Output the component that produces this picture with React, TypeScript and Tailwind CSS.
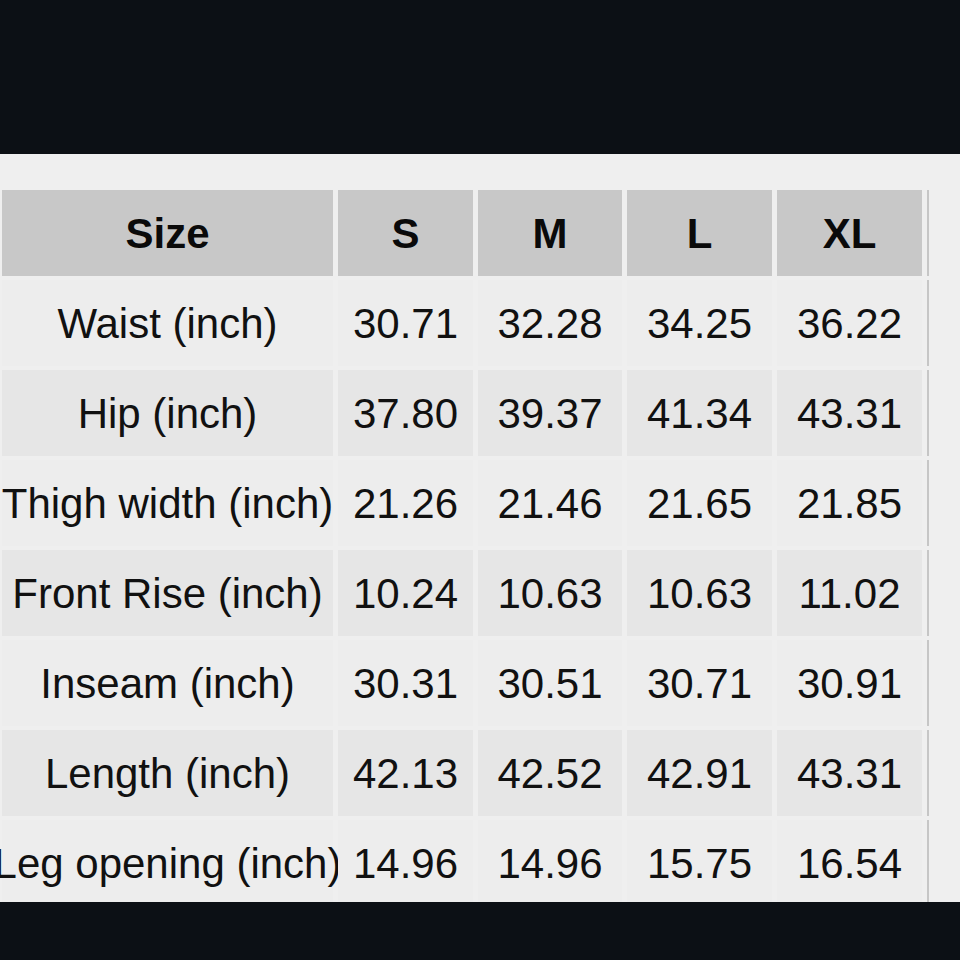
const sizes = ["S", "M", "L", "XL"];

const rows: { label: string; values: string[] }[] = [
  { label: "Waist (inch)", values: ["30.71", "32.28", "34.25", "36.22"] },
  { label: "Hip (inch)", values: ["37.80", "39.37", "41.34", "43.31"] },
  { label: "Thigh width (inch)", values: ["21.26", "21.46", "21.65", "21.85"] },
  { label: "Front Rise (inch)", values: ["10.24", "10.63", "10.63", "11.02"] },
  { label: "Inseam (inch)", values: ["30.31", "30.51", "30.71", "30.91"] },
  { label: "Length (inch)", values: ["42.13", "42.52", "42.91", "43.31"] },
  { label: "Leg opening (inch)", values: ["14.96", "14.96", "15.75", "16.54"] },
];

const font = { fontFamily: '"Liberation Sans", Arial, sans-serif' };

export default function App() {
  return (
    <div className="h-[960px] w-[960px] overflow-hidden bg-[#0c1015] pt-[154px]" style={font}>
      <div className="h-[748px] overflow-hidden bg-[#efefef] pt-[36px] pl-[2px]">
        <div className="grid grid-cols-[331px_135px_144px_145px_145px_2px] gap-x-[5px] gap-y-[4px] auto-rows-[86px]">
          {/* Header */}
          <div className="flex items-center justify-center bg-[#c8c8c8] text-[42px] font-bold text-[#0a0a0a]">
            Size
          </div>
          {sizes.map((s) => (
            <div
              key={s}
              className="flex items-center justify-center bg-[#c8c8c8] text-[42px] font-bold text-[#0a0a0a]"
            >
              {s}
            </div>
          ))}
          <div className="bg-[#c6c6c6]" />

          {/* Body */}
          {rows.map((r, i) => {
            const bg = i % 2 === 0 ? "bg-[#ededed]" : "bg-[#e6e6e6]";
            return [
              <div
                key={r.label}
                className={`flex items-center justify-center whitespace-nowrap text-[42px] text-[#111] ${bg}`}
              >
                {r.label}
              </div>,
              ...r.values.map((v, j) => (
                <div
                  key={r.label + j}
                  className={`flex items-center justify-center text-[42px] text-[#111] ${bg}`}
                >
                  {v}
                </div>
              )),
              <div key={r.label + "line"} className="bg-[#c6c6c6]" />,
            ];
          })}
        </div>
      </div>
    </div>
  );
}
